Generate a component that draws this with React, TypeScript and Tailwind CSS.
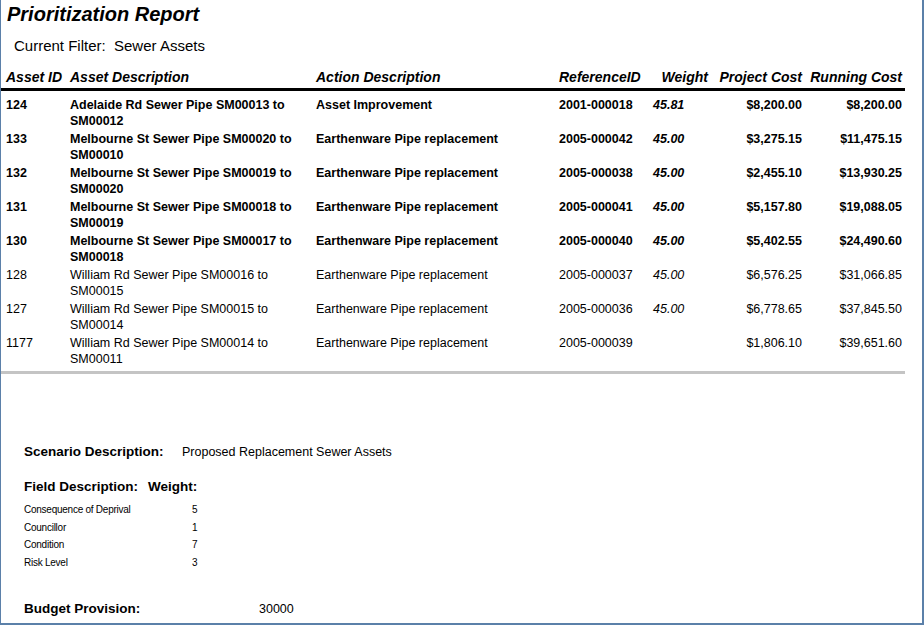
type Row = {
  id: string;
  desc: [string, string];
  action: string;
  ref: string;
  weight: string;
  cost: string;
  running: string;
  bold: boolean;
};

const rows: Row[] = [
  { id: '124', desc: ['Adelaide Rd Sewer Pipe SM00013 to', 'SM00012'], action: 'Asset Improvement', ref: '2001-000018', weight: '45.81', cost: '$8,200.00', running: '$8,200.00', bold: true },
  { id: '133', desc: ['Melbourne St Sewer Pipe SM00020 to', 'SM00010'], action: 'Earthenware Pipe replacement', ref: '2005-000042', weight: '45.00', cost: '$3,275.15', running: '$11,475.15', bold: true },
  { id: '132', desc: ['Melbourne St Sewer Pipe SM00019 to', 'SM00020'], action: 'Earthenware Pipe replacement', ref: '2005-000038', weight: '45.00', cost: '$2,455.10', running: '$13,930.25', bold: true },
  { id: '131', desc: ['Melbourne St Sewer Pipe SM00018 to', 'SM00019'], action: 'Earthenware Pipe replacement', ref: '2005-000041', weight: '45.00', cost: '$5,157.80', running: '$19,088.05', bold: true },
  { id: '130', desc: ['Melbourne St Sewer Pipe SM00017 to', 'SM00018'], action: 'Earthenware Pipe replacement', ref: '2005-000040', weight: '45.00', cost: '$5,402.55', running: '$24,490.60', bold: true },
  { id: '128', desc: ['William Rd Sewer Pipe SM00016 to', 'SM00015'], action: 'Earthenware Pipe replacement', ref: '2005-000037', weight: '45.00', cost: '$6,576.25', running: '$31,066.85', bold: false },
  { id: '127', desc: ['William Rd Sewer Pipe SM00015 to', 'SM00014'], action: 'Earthenware Pipe replacement', ref: '2005-000036', weight: '45.00', cost: '$6,778.65', running: '$37,845.50', bold: false },
  { id: '1177', desc: ['William Rd Sewer Pipe SM00014 to', 'SM00011'], action: 'Earthenware Pipe replacement', ref: '2005-000039', weight: '', cost: '$1,806.10', running: '$39,651.60', bold: false },
];

const fields = [
  { name: 'Consequence of Deprival', weight: '5' },
  { name: 'Councillor', weight: '1' },
  { name: 'Condition', weight: '7' },
  { name: 'Risk Level', weight: '3' },
];

// column template shared by header and rows
const cols = 'grid grid-cols-[64px_246px_243px_94px_55px_94px_100px] pl-[5px]';

export default function App() {
  return (
    <div className="w-[924px] h-[625px] bg-white border-l border-r-2 border-b-2 border-[#5b80a9] text-black font-['Liberation_Sans',Arial,sans-serif] overflow-hidden">
      <div className="w-[904px]">
        <h1 className="pt-[2px] pl-[6px] text-[20px] leading-[24px] font-bold italic">
          Prioritization Report
        </h1>
        <div className="mt-[11px] pl-[13px] text-[15px] leading-[18px] whitespace-pre">
          Current Filter:  Sewer Assets
        </div>

        {/* table header */}
        <div className={`${cols} mt-[14px] pb-[3px] border-b-[3px] border-black text-[14px] leading-[16px] font-bold italic`}>
          <div>Asset ID</div>
          <div>Asset Description</div>
          <div>Action Description</div>
          <div>ReferenceID</div>
          <div className="text-right">Weight</div>
          <div className="text-right">Project Cost</div>
          <div className="text-right">Running Cost</div>
        </div>

        <div className="pt-[6px] flex flex-col gap-[2px]">
          {rows.map((r) => (
            <div
              key={r.id}
              className={`${cols} text-[12.5px] leading-[16px] h-[32px] ${r.bold ? 'font-bold' : 'font-normal'}`}
            >
              <div>{r.id}</div>
              <div>
                <div>{r.desc[0]}</div>
                <div>{r.desc[1]}</div>
              </div>
              <div>{r.action}</div>
              <div>{r.ref}</div>
              <div className="italic">{r.weight}</div>
              <div className="text-right">{r.cost}</div>
              <div className="text-right">{r.running}</div>
            </div>
          ))}
        </div>

        <div className="mt-[4px] h-[3px] bg-[#c4c4c4]" />
      </div>

      {/* scenario summary */}
      <div className="pl-[23px]">
        <div className="mt-[70px] flex items-baseline">
          <div className="w-[158px] text-[13.5px] leading-[16px] font-bold">Scenario Description:</div>
          <div className="text-[12.5px] leading-[16px]">Proposed Replacement Sewer Assets</div>
        </div>
        <div className="mt-[19px] flex text-[13.5px] leading-[16px] font-bold">
          <div className="w-[124px]">Field Description:</div>
          <div>Weight:</div>
        </div>
        <div className="mt-[6px] flex flex-col text-[10px] leading-[17.7px] tracking-[-0.25px]">
          {fields.map((f) => (
            <div key={f.name} className="flex">
              <div className="w-[168px]">{f.name}</div>
              <div>{f.weight}</div>
            </div>
          ))}
        </div>
        <div className="mt-[29px] flex items-baseline">
          <div className="w-[235px] text-[13.5px] leading-[16px] font-bold">Budget Provision:</div>
          <div className="text-[12.5px] leading-[16px]">30000</div>
        </div>
      </div>
    </div>
  );
}
